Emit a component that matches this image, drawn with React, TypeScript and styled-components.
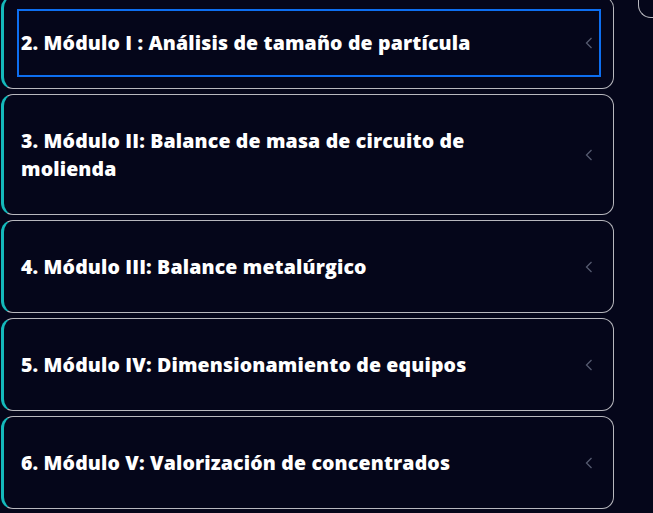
import React from "react";
import styled, { createGlobalStyle } from "styled-components";

const Global = createGlobalStyle`
  html, body { margin: 0; padding: 0; background: #05061a; overflow: hidden; }
  body { font-family: "Open Sans", Inter, sans-serif; }
`;

const Page = styled.div`
  display: flex;
  align-items: flex-start;
  gap: 24px;
  padding-left: 1px;
  height: 513px;
  overflow: hidden;
`;

const List = styled.div`
  flex: none;
  width: 613px;
  display: flex;
  flex-direction: column;
  gap: 5px;
  margin-top: -4px;
`;

const Side = styled.div`
  flex: 1;
  height: 26px;
  margin-top: -10px;
  border: 1px solid #b9b9c0;
  border-right: none;
  border-radius: 0 0 0 13px;
`;

const Card = styled.div`
  box-sizing: border-box;
  border: 1px solid #b8b8be;
  border-left: 3px solid #14b9bb;
  border-radius: 12px;
  padding: 12px 12px 11px 13px;
`;

const Header = styled.button<{ $focused?: boolean }>`
  all: unset;
  box-sizing: border-box;
  width: 100%;
  display: flex;
  align-items: center;
  justify-content: space-between;
  padding: 18px 6px 18px 2px;
  border: 2px solid ${(p) => (p.$focused ? "#0d6ef0" : "transparent")};
  cursor: pointer;
`;

const Title = styled.span`
  color: #ffffff;
  font-family: "Open Sans", Inter, sans-serif;
  font-weight: 800;
  font-size: 19.5px;
  line-height: 28px;
  letter-spacing: 0.15px;
  max-width: 470px;
`;

const Chevron = styled.svg`
  flex: none;
  width: 8px;
  height: 12px;
`;

const items = [
  "2. Módulo I : Análisis de tamaño de partícula",
  "3. Módulo II: Balance de masa de circuito de molienda",
  "4. Módulo III: Balance metalúrgico",
  "5. Módulo IV: Dimensionamiento de equipos",
  "6. Módulo V: Valorización de concentrados",
];

export default function App() {
  return (
    <>
      <Global />
      <Page>
        <List>
          {items.map((t, i) => (
            <Card key={t}>
              <Header $focused={i === 0}>
                <Title>{t}</Title>
                <Chevron viewBox="0 0 8 12">
                  <path d="M6.5 1 L1.5 6 L6.5 11" fill="none" stroke="#565b70" strokeWidth="1.3" />
                </Chevron>
              </Header>
            </Card>
          ))}
        </List>
        <Side />
      </Page>
    </>
  );
}
